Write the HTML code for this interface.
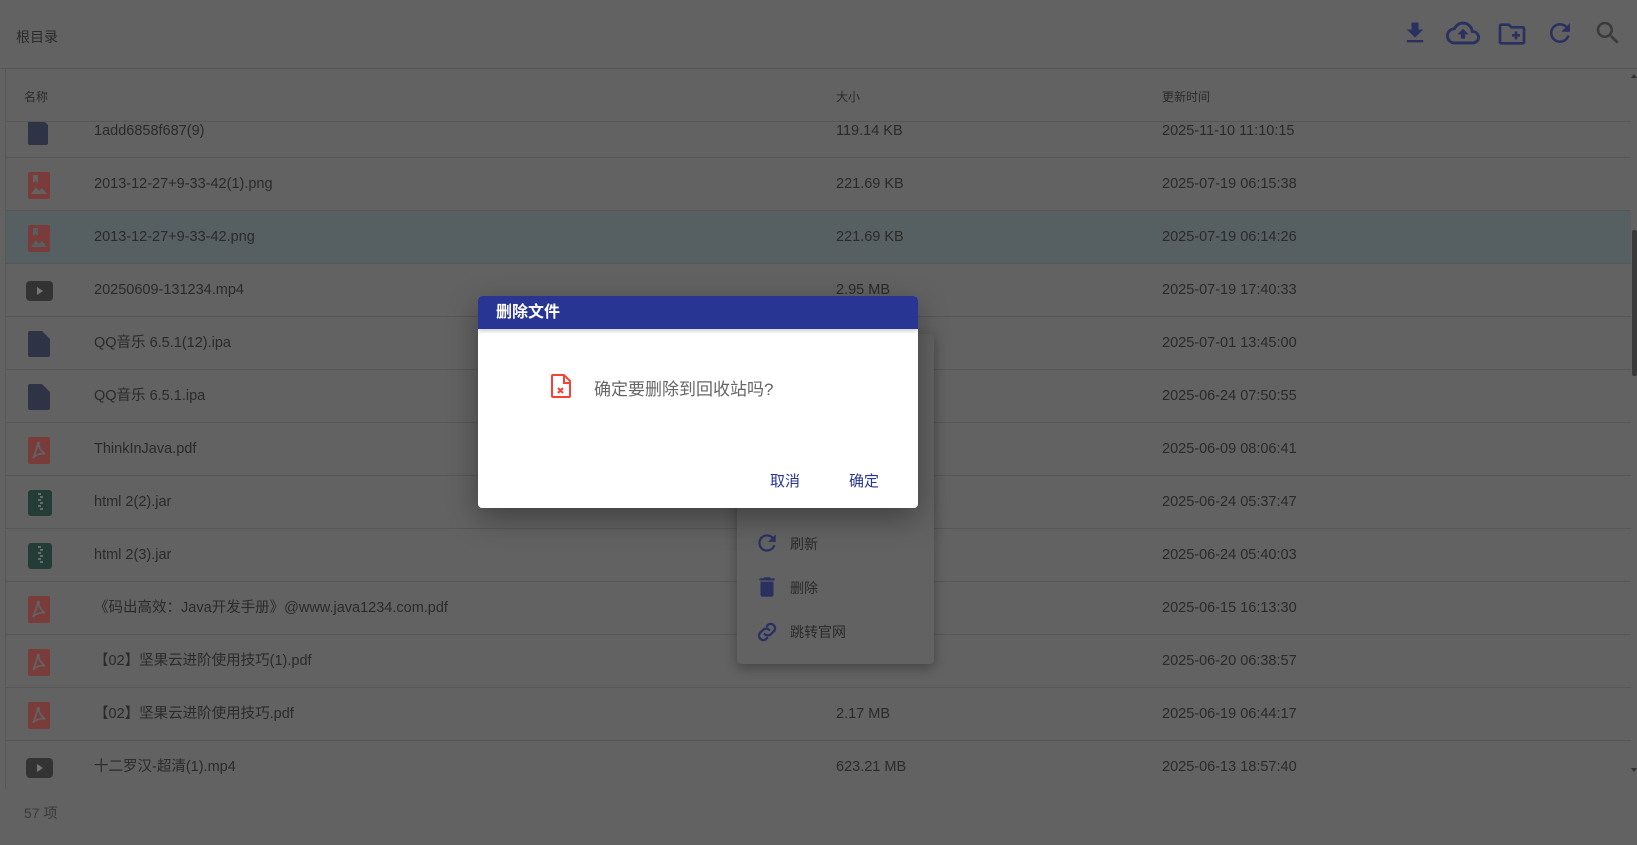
<!DOCTYPE html>
<html><head><meta charset="utf-8">
<style>
*{margin:0;padding:0;box-sizing:border-box}
body{width:1637px;height:845px;overflow:hidden;background:#626262;font-family:"Liberation Sans","Noto Sans CJK SC",sans-serif;color:#2a2a2a;position:relative}
.abs{position:absolute}
.row{position:absolute;left:6px;width:1625px;height:53px;border-bottom:1px solid #575757;font-size:14.5px}
.row span{position:absolute;top:0;line-height:53px;white-space:nowrap}
.row .n{left:88px}.row .s{left:830px}.row .t{left:1156px}
.row svg{position:absolute;left:22px;top:14px}
.sel{background:#566062}
</style></head><body>
<div class="abs" style="left:0;top:0;width:1637px;height:69px;border-bottom:1px solid #575757"></div>
<div class="abs" style="left:16px;top:27px;font-size:14px">根目录</div>
<svg class="abs" style="left:1401px;top:19px" width="28" height="28" viewBox="0 0 24 24"><path fill="#2a3060" d="M19 9h-4V3H9v6H5l7 7 7-7zM5 18v2h14v-2H5z"/></svg>
<svg class="abs" style="left:1446px;top:16px" width="34" height="34" viewBox="0 0 24 24"><path fill="#2a3060" d="M19.35 10.04C18.670 6.59 15.64 4 12 4 9.11 4 6.6 5.64 5.35 8.04 2.34 8.36 0 10.91 0 14c0 3.31 2.69 6 6 6h13c2.76 0 5-2.24 5-5 0-2.64-2.05-4.780-4.65-4.96zM19 18H6c-2.21 0-4-1.79-4-4 0-2.05 1.53-3.76 3.56-3.97l1.07-.11.5-.95C8.08 7.14 9.94 6 12 6c2.62 0 4.88 1.86 5.39 4.43l.3 1.5 1.53.11c1.56.1 2.78 1.41 2.78 2.96 0 1.65-1.35 3-3 3zM8 13h2.55v3h2.9v-3H16l-4-4z"/></svg>
<svg class="abs" style="left:1496px;top:18px" width="32" height="32" viewBox="0 0 24 24"><path fill="#2a3060" d="M20 6h-8l-2-2H4c-1.11 0-1.99.89-1.99 2L2 18c0 1.11.89 2 2 2h16c1.11 0 2-.89 2-2V8c0-1.11-.89-2-2-2zm0 12H4V6h5.17l2 2H20v10zm-8-4h2v2h2v-2h2v-2h-2v-2h-2v2h-2z"/></svg>
<svg class="abs" style="left:1545px;top:18px" width="30" height="30" viewBox="0 0 24 24"><path fill="#2a3060" d="M17.65 6.35C16.2 4.9 14.21 4 12 4c-4.42 0-7.99 3.58-7.99 8s3.57 8 7.99 8c3.730 0 6.84-2.55 7.73-6h-2.08c-.82 2.33-3.04 4-5.65 4-3.31 0-6-2.69-6-6s2.69-6 6-6c1.66 0 3.14.69 4.22 1.78L13 11h7V4l-2.35 2.35z"/></svg>
<svg class="abs" style="left:1593px;top:18px" width="30" height="30" viewBox="0 0 24 24"><path fill="#3a3a3a" d="M15.5 14h-.79l-.28-.27C15.41 12.59 16 11.11 16 9.5 16 5.91 13.09 3 9.5 3S3 5.91 3 9.5 5.910 16 9.5 16c1.61 0 3.09-.59 4.23-1.57l.27.28v.79l5 4.99L20.49 19l-4.99-5zm-6 0C7.01 14 5 11.99 5 9.5S7.01 5 9.5 5 14 7.01 14 9.5 11.99 14 9.5 14z"/></svg>

<div class="abs" style="left:5px;top:69px;width:1px;height:720px;background:#575757"></div>
<div class="abs" style="left:0;top:122px;width:1637px;height:669px;overflow:hidden">
<div style="position:absolute;top:-122px;left:0;width:1637px;height:900px">
<div class="row" style="top:105px"><svg width="22" height="26" viewBox="0 0 22 26"><path fill="#2e3346" d="M2 0h12l6 6v18a2 2 0 0 1-2 2H2a2 2 0 0 1-2-2V2a2 2 0 0 1 2-2z"/></svg><span class="n">1add6858f687(9)</span><span class="s">119.14 KB</span><span class="t">2025-11-10 11:10:15</span></div>
<div class="row" style="top:158px"><svg width="22" height="27" viewBox="0 0 22 27"><rect width="22" height="27" rx="2" fill="#7a3b3b"/><path fill="#626262" d="M5 3h5v8l-2.5-2-2.5 2z M3 22l5-7 3 4 3-3 5 6z"/></svg><span class="n">2013-12-27+9-33-42(1).png</span><span class="s">221.69 KB</span><span class="t">2025-07-19 06:15:38</span></div>
<div class="row sel" style="top:211px"><svg width="22" height="27" viewBox="0 0 22 27"><rect width="22" height="27" rx="2" fill="#7a3b3b"/><path fill="#566062" d="M5 3h5v8l-2.5-2-2.5 2z M3 22l5-7 3 4 3-3 5 6z"/></svg><span class="n">2013-12-27+9-33-42.png</span><span class="s">221.69 KB</span><span class="t">2025-07-19 06:14:26</span></div>
<div class="row" style="top:264px"><svg width="27" height="20" viewBox="0 0 27 20" style="left:20px;top:17px"><rect width="27" height="20" rx="4" fill="#333"/><path fill="#777" d="M11 6l6 4-6 4z"/></svg><span class="n">20250609-131234.mp4</span><span class="s">2.95 MB</span><span class="t">2025-07-19 17:40:33</span></div>
<div class="row" style="top:317px"><svg width="22" height="26" viewBox="0 0 22 26"><path fill="#2e3346" d="M2 0h12l8 8v16a2 2 0 0 1-2 2H2a2 2 0 0 1-2-2V2a2 2 0 0 1 2-2z"/></svg><span class="n">QQ音乐 6.5.1(12).ipa</span><span class="t">2025-07-01 13:45:00</span></div>
<div class="row" style="top:370px"><svg width="22" height="26" viewBox="0 0 22 26"><path fill="#2e3346" d="M2 0h12l8 8v16a2 2 0 0 1-2 2H2a2 2 0 0 1-2-2V2a2 2 0 0 1 2-2z"/></svg><span class="n">QQ音乐 6.5.1.ipa</span><span class="t">2025-06-24 07:50:55</span></div>
<div class="row" style="top:423px"><svg width="22" height="27" viewBox="0 0 22 27"><rect width="22" height="27" rx="2" fill="#7a3b3b"/><path fill="none" stroke="#626262" stroke-width="1.8" d="M11 5c-1 4 1 8 6 12-4-1-8 0-12 4 2-5 4-9 5-16"/></svg><span class="n">ThinkInJava.pdf</span><span class="t">2025-06-09 08:06:41</span></div>
<div class="row" style="top:476px"><svg width="24" height="26" viewBox="0 0 24 26"><rect width="24" height="26" rx="3" fill="#243c36"/><path fill="#6a6a6a" d="M10 3h3v2h-3zM12 6h3v2h-3zM10 9h3v2h-3zM12 12h3v2h-3zM10 15h3v2h-3zM12 18h3v2h-3z"/></svg><span class="n">html 2(2).jar</span><span class="t">2025-06-24 05:37:47</span></div>
<div class="row" style="top:529px"><svg width="24" height="26" viewBox="0 0 24 26"><rect width="24" height="26" rx="3" fill="#243c36"/><path fill="#6a6a6a" d="M10 3h3v2h-3zM12 6h3v2h-3zM10 9h3v2h-3zM12 12h3v2h-3zM10 15h3v2h-3zM12 18h3v2h-3z"/></svg><span class="n">html 2(3).jar</span><span class="t">2025-06-24 05:40:03</span></div>
<div class="row" style="top:582px"><svg width="22" height="27" viewBox="0 0 22 27"><rect width="22" height="27" rx="2" fill="#7a3b3b"/><path fill="none" stroke="#626262" stroke-width="1.8" d="M11 5c-1 4 1 8 6 12-4-1-8 0-12 4 2-5 4-9 5-16"/></svg><span class="n">《码出高效：Java开发手册》@www.java1234.com.pdf</span><span class="t">2025-06-15 16:13:30</span></div>
<div class="row" style="top:635px"><svg width="22" height="27" viewBox="0 0 22 27"><rect width="22" height="27" rx="2" fill="#7a3b3b"/><path fill="none" stroke="#626262" stroke-width="1.8" d="M11 5c-1 4 1 8 6 12-4-1-8 0-12 4 2-5 4-9 5-16"/></svg><span class="n">【02】坚果云进阶使用技巧(1).pdf</span><span class="t">2025-06-20 06:38:57</span></div>
<div class="row" style="top:688px"><svg width="22" height="27" viewBox="0 0 22 27"><rect width="22" height="27" rx="2" fill="#7a3b3b"/><path fill="none" stroke="#626262" stroke-width="1.8" d="M11 5c-1 4 1 8 6 12-4-1-8 0-12 4 2-5 4-9 5-16"/></svg><span class="n">【02】坚果云进阶使用技巧.pdf</span><span class="s">2.17 MB</span><span class="t">2025-06-19 06:44:17</span></div>
<div class="row" style="top:741px"><svg width="27" height="20" viewBox="0 0 27 20" style="left:20px;top:17px"><rect width="27" height="20" rx="4" fill="#333"/><path fill="#777" d="M11 6l6 4-6 4z"/></svg><span class="n">十二罗汉-超清(1).mp4</span><span class="s">623.21 MB</span><span class="t">2025-06-13 18:57:40</span></div>
</div></div>
<div class="abs" style="left:6px;top:69px;width:1625px;height:53px;background:#626262;border-bottom:1px solid #575757;font-size:12px">
<span class="abs" style="left:18px;top:19px">名称</span><span class="abs" style="left:830px;top:19px">大小</span><span class="abs" style="left:1156px;top:19px">更新时间</span></div>
<div class="abs" style="left:24px;top:803px;font-size:14px;color:#3a3a3a">57 项</div>
<div class="abs" style="left:1632px;top:230px;width:5px;height:146px;background:#3a3a3a;border-radius:2px"></div>
<div class="abs" style="left:1631px;top:74px;width:0;height:0;border-left:3px solid transparent;border-right:3px solid transparent;border-bottom:4px solid #333"></div>
<div class="abs" style="left:1631px;top:768px;width:0;height:0;border-left:3px solid transparent;border-right:3px solid transparent;border-top:4px solid #333"></div>

<div class="abs" style="left:737px;top:334px;width:197px;height:330px;background:#626262;border-radius:4px;box-shadow:0 4px 12px rgba(0,0,0,.3)">
<svg class="abs" style="left:17px;top:196px" width="26" height="26" viewBox="0 0 24 24"><path fill="#2a3060" d="M17.65 6.35C16.2 4.9 14.21 4 12 4c-4.42 0-7.99 3.58-7.99 8s3.57 8 7.99 8c3.73 0 6.84-2.55 7.73-6h-2.08c-.82 2.33-3.04 4-5.65 4-3.31 0-6-2.69-6-6s2.69-6 6-6c1.66 0 3.14.69 4.22 1.78L13 11h7V4l-2.35 2.35z"/></svg>
<span class="abs" style="left:53px;top:200px;font-size:14px">刷新</span>
<svg class="abs" style="left:17px;top:240px" width="26" height="26" viewBox="0 0 24 24"><path fill="#2a3060" d="M6 19c0 1.1.9 2 2 2h8c1.1 0 2-.9 2-2V7H6v12zM19 4h-3.5l-1-1h-5l-1 1H5v2h14V4z"/></svg>
<span class="abs" style="left:53px;top:244px;font-size:14px">删除</span>
<svg class="abs" style="left:17px;top:285px" width="26" height="26" viewBox="0 0 24 24"><path fill="none" stroke="#2a3060" stroke-width="2.2" stroke-linecap="round" d="M10 14a4 4 0 0 0 5.6 0l3-3a4 4 0 0 0-5.6-5.6l-1 1M14 10a4 4 0 0 0-5.6 0l-3 3a4 4 0 0 0 5.6 5.6l1-1"/></svg>
<span class="abs" style="left:53px;top:288px;font-size:14px">跳转官网</span>
</div>

<div class="abs" style="left:478px;top:296px;width:440px;height:212px;background:#fff;border-radius:4px;overflow:hidden;box-shadow:0 10px 30px rgba(0,0,0,.35)">
<div style="height:33px;background:#283593;color:#fff;font-size:16px;font-weight:bold;padding-left:18px;line-height:33px;box-shadow:0 2px 4px rgba(0,0,0,.2)">删除文件</div>
<svg class="abs" style="left:73px;top:78px" width="21" height="24" viewBox="0 0 21 24"><path fill="none" stroke="#f44336" stroke-width="2" d="M2 1h11l6 6v15a1 1 0 0 1-1 1H2a1 1 0 0 1-1-1V2a1 1 0 0 1 1-1z"/><path fill="#f44336" d="M12 1h2v7h6v2h-8z"/><path stroke="#f44336" stroke-width="2" d="M7 14l5 5M12 14l-5 5"/></svg>
<div class="abs" style="left:116px;top:79px;font-size:17px;color:#666">确定要删除到回收站吗?</div>
<div class="abs" style="left:292px;top:174px;font-size:15px;color:#283593">取消</div>
<div class="abs" style="left:371px;top:174px;font-size:15px;color:#283593">确定</div>
</div>
</body></html>
